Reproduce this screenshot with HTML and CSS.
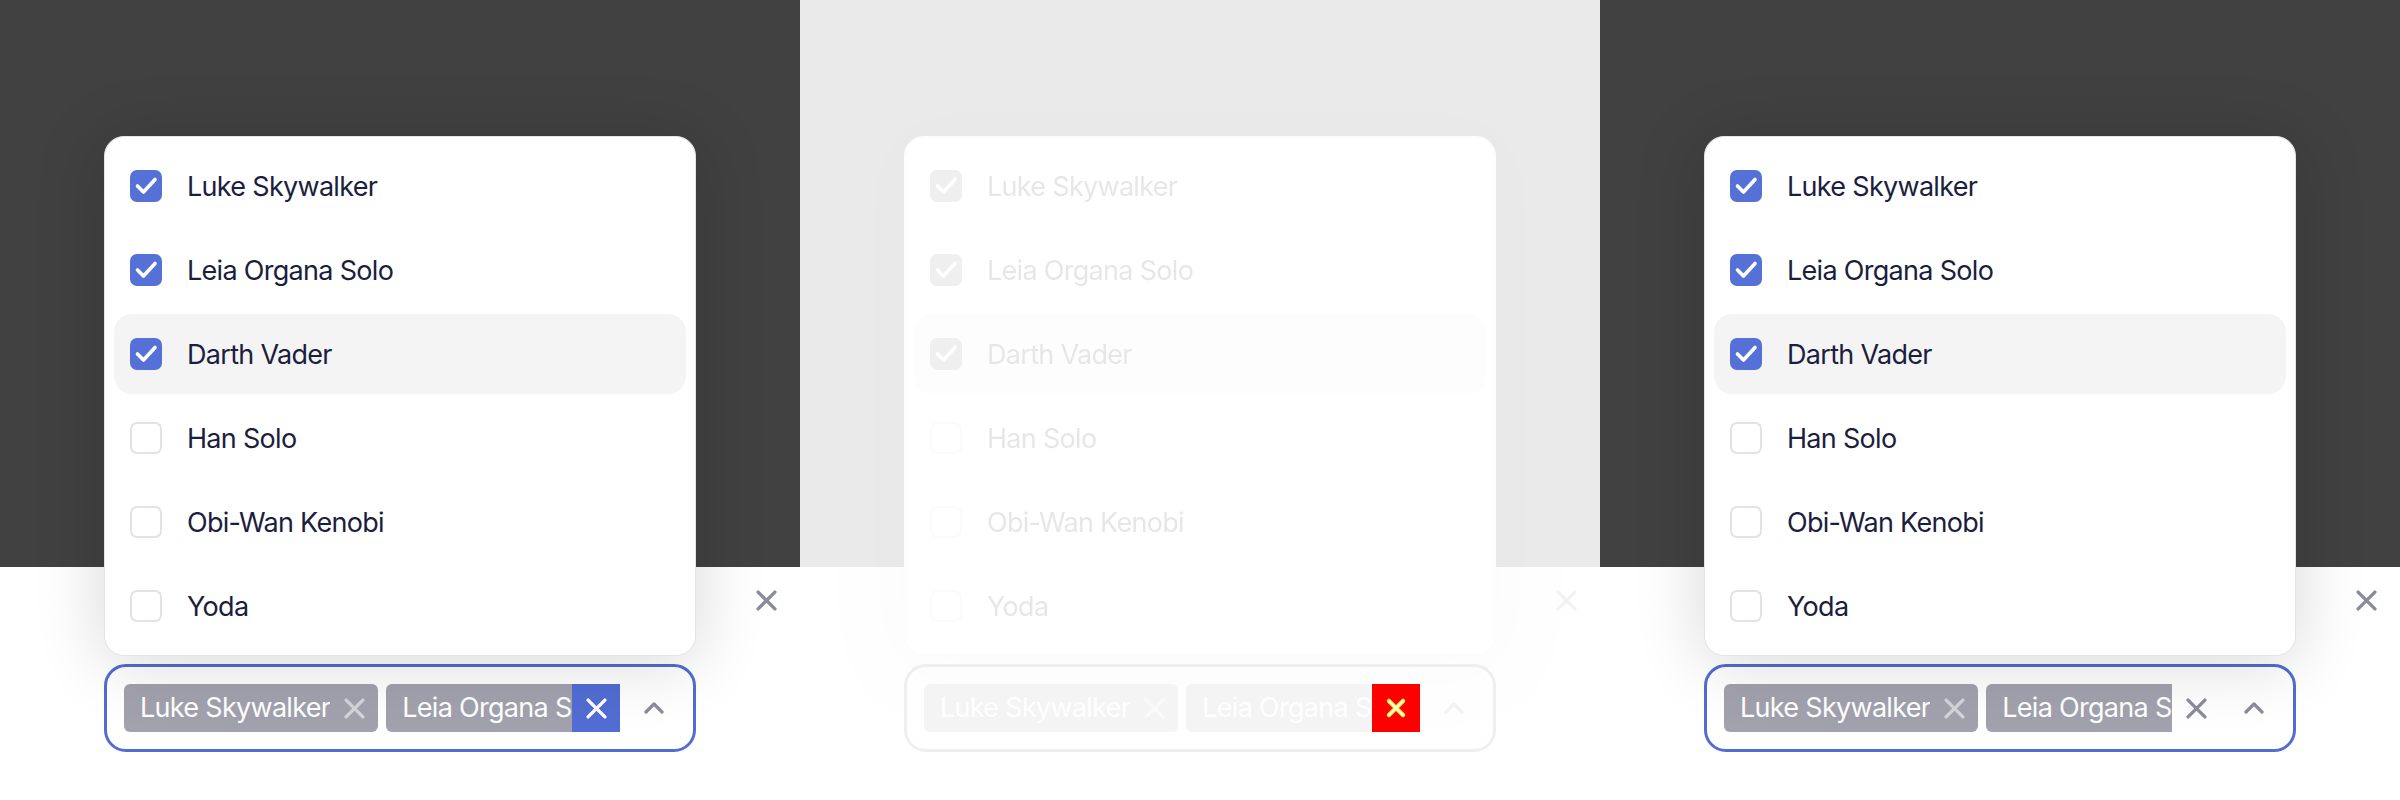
FILE: index.html
```html
<!DOCTYPE html>
<html lang="en">
<head>
<meta charset="utf-8">
<title>Multi select</title>
<link rel="stylesheet" href="styles.css">
</head>
<body>
<main class="stage">

  <!-- Panel 1 -->
  <section class="panel">
    <div class="scene">
      <div class="backdrop"></div>
      <div class="sheet">
        <div class="field">
          <label class="label">Choose an option</label>
          <div class="combo">
            <ul class="menu">
              <li class="option"><span class="box is-checked"><svg viewBox="0 0 32 32"><path d="M7.5 16l6 6L25 9.5"/></svg></span><span class="option-text">Luke Skywalker</span></li>
              <li class="option"><span class="box is-checked"><svg viewBox="0 0 32 32"><path d="M7.5 16l6 6L25 9.5"/></svg></span><span class="option-text">Leia Organa Solo</span></li>
              <li class="option is-hover"><span class="box is-checked"><svg viewBox="0 0 32 32"><path d="M7.5 16l6 6L25 9.5"/></svg></span><span class="option-text">Darth Vader</span></li>
              <li class="option"><span class="box"></span><span class="option-text">Han Solo</span></li>
              <li class="option"><span class="box"></span><span class="option-text">Obi-Wan Kenobi</span></li>
              <li class="option"><span class="box"></span><span class="option-text">Yoda</span></li>
            </ul>
            <div class="control">
              <div class="tags">
                <span class="tag"><span class="tag-text">Luke Skywalker</span><span class="tag-remove"><svg viewBox="0 0 20 20"><path d="M2 2l16 16M18 2L2 18"/></svg></span></span>
                <span class="tag tag-shrink"><span class="tag-text">Leia Organa Solo</span><span class="tag-remove is-active"><svg viewBox="0 0 20 20"><path d="M2 2l16 16M18 2L2 18"/></svg></span></span>
              </div>
              <span class="chevron"><svg viewBox="0 0 20 12"><path d="M2 10l8-8 8 8"/></svg></span>
            </div>
          </div>
        </div>
        <button class="close" aria-label="Close"><svg viewBox="0 0 20 20"><path d="M2 2l16 16M18 2L2 18"/></svg></button>
      </div>
    </div>
  </section>

  <!-- Panel 2 -->
  <section class="panel">
    <div class="scene is-ghost">
      <div class="backdrop"></div>
      <div class="sheet">
        <div class="field">
          <label class="label">Choose an option</label>
          <div class="combo">
            <ul class="menu">
              <li class="option"><span class="box is-checked"><svg viewBox="0 0 32 32"><path d="M7.5 16l6 6L25 9.5"/></svg></span><span class="option-text">Luke Skywalker</span></li>
              <li class="option"><span class="box is-checked"><svg viewBox="0 0 32 32"><path d="M7.5 16l6 6L25 9.5"/></svg></span><span class="option-text">Leia Organa Solo</span></li>
              <li class="option is-hover"><span class="box is-checked"><svg viewBox="0 0 32 32"><path d="M7.5 16l6 6L25 9.5"/></svg></span><span class="option-text">Darth Vader</span></li>
              <li class="option"><span class="box"></span><span class="option-text">Han Solo</span></li>
              <li class="option"><span class="box"></span><span class="option-text">Obi-Wan Kenobi</span></li>
              <li class="option"><span class="box"></span><span class="option-text">Yoda</span></li>
            </ul>
            <div class="control">
              <div class="tags">
                <span class="tag"><span class="tag-text">Luke Skywalker</span><span class="tag-remove"><svg viewBox="0 0 20 20"><path d="M2 2l16 16M18 2L2 18"/></svg></span></span>
                <span class="tag tag-shrink"><span class="tag-text">Leia Organa Solo</span><span class="tag-remove is-active"><svg viewBox="0 0 20 20"><path d="M2 2l16 16M18 2L2 18"/></svg></span></span>
              </div>
              <span class="chevron"><svg viewBox="0 0 20 12"><path d="M2 10l8-8 8 8"/></svg></span>
            </div>
          </div>
        </div>
        <button class="close" aria-label="Close"><svg viewBox="0 0 20 20"><path d="M2 2l16 16M18 2L2 18"/></svg></button>
      </div>
    </div>
    <span class="flag"><svg viewBox="0 0 22 22"><path class="flag-edge" d="M4 4l14 14M18 4L4 18"/><path class="flag-core" d="M4 4l14 14M18 4L4 18"/></svg></span>
  </section>

  <!-- Panel 3 -->
  <section class="panel">
    <div class="scene">
      <div class="backdrop"></div>
      <div class="sheet">
        <div class="field">
          <label class="label">Choose an option</label>
          <div class="combo">
            <ul class="menu">
              <li class="option"><span class="box is-checked"><svg viewBox="0 0 32 32"><path d="M7.5 16l6 6L25 9.5"/></svg></span><span class="option-text">Luke Skywalker</span></li>
              <li class="option"><span class="box is-checked"><svg viewBox="0 0 32 32"><path d="M7.5 16l6 6L25 9.5"/></svg></span><span class="option-text">Leia Organa Solo</span></li>
              <li class="option is-hover"><span class="box is-checked"><svg viewBox="0 0 32 32"><path d="M7.5 16l6 6L25 9.5"/></svg></span><span class="option-text">Darth Vader</span></li>
              <li class="option"><span class="box"></span><span class="option-text">Han Solo</span></li>
              <li class="option"><span class="box"></span><span class="option-text">Obi-Wan Kenobi</span></li>
              <li class="option"><span class="box"></span><span class="option-text">Yoda</span></li>
            </ul>
            <div class="control">
              <div class="tags">
                <span class="tag"><span class="tag-text">Luke Skywalker</span><span class="tag-remove"><svg viewBox="0 0 20 20"><path d="M2 2l16 16M18 2L2 18"/></svg></span></span>
                <span class="tag tag-shrink"><span class="tag-text">Leia Organa Solo</span><span class="tag-remove is-bare"><svg viewBox="0 0 20 20"><path d="M2 2l16 16M18 2L2 18"/></svg></span></span>
              </div>
              <span class="chevron"><svg viewBox="0 0 20 12"><path d="M2 10l8-8 8 8"/></svg></span>
            </div>
          </div>
        </div>
        <button class="close" aria-label="Close"><svg viewBox="0 0 20 20"><path d="M2 2l16 16M18 2L2 18"/></svg></button>
      </div>
    </div>
  </section>

</main>
</body>
</html>
```

FILE: styles.css
```css
* { box-sizing: border-box; }

html, body {
  margin: 0;
  padding: 0;
  background: #ffffff;
}

body {
  font-family: Inter, "Noto Sans", "Liberation Sans", sans-serif;
  color: #1b1e3c;
}

.stage {
  display: grid;
  grid-template-columns: repeat(3, 800px);
  height: 800px;
}

.panel {
  position: relative;
  height: 800px;
  overflow: hidden;
  background: #ffffff;
}

.scene {
  display: flex;
  flex-direction: column;
  height: 800px;
}

.scene.is-ghost {
  opacity: 0.105;
  filter: grayscale(1);
}

.backdrop {
  flex: none;
  height: 567px;
  background: #414141;
}

.sheet {
  flex: 1;
  display: flex;
  align-items: flex-start;
  padding: 0 23px 0 104px;
  background: #ffffff;
}

.field {
  width: 592px;
  margin-top: 56px;
  display: flex;
  flex-direction: column;
}

.label {
  font-size: 27px;
  letter-spacing: -0.6px;
  line-height: 34px;
  font-weight: 500;
  color: #1b1e3c;
  margin-bottom: 7px;
}

.combo {
  position: relative;
}

/* dropdown menu (overlay) */
.menu {
  position: absolute;
  left: 0;
  right: 0;
  bottom: calc(100% + 8px);
  z-index: 2;
  margin: 0;
  padding: 9px;
  list-style: none;
  display: flex;
  flex-direction: column;
  gap: 4px;
  background: #ffffff;
  border: 1px solid #e4e4e4;
  border-radius: 20px;
  box-shadow: 0 6px 70px rgba(0, 0, 0, 0.16);
}

.option {
  height: 80px;
  display: flex;
  align-items: center;
  gap: 25px;
  padding-left: 16px;
  border-radius: 18px;
  font-size: 27px;
  letter-spacing: -0.7px;
  color: #1b1e3c;
}

.option.is-hover {
  background: #f4f4f4;
}

.box {
  flex: none;
  width: 32px;
  height: 32px;
  border-radius: 7px;
  border: 2px solid #e3e3e3;
  background: #ffffff;
  display: flex;
  align-items: center;
  justify-content: center;
}

.box.is-checked {
  border: none;
  background: #5570d6;
}

.box svg {
  width: 32px;
  height: 32px;
  fill: none;
  stroke: #ffffff;
  stroke-width: 3.6;
  stroke-linecap: round;
  stroke-linejoin: round;
}

/* control */
.control {
  height: 88px;
  display: flex;
  align-items: center;
  gap: 12px;
  padding: 0 17px;
  border: 3px solid #526dd3;
  border-radius: 22px;
  background: #ffffff;
}

.tags {
  flex: 1;
  min-width: 0;
  display: flex;
  gap: 8px;
  overflow: hidden;
}

.tag {
  flex: none;
  display: flex;
  align-items: center;
  height: 48px;
  padding-left: 16px;
  border-radius: 6px;
  background: #a1a2ae;
  color: #ffffff;
  font-size: 27px;
  letter-spacing: -0.7px;
}

.tag-shrink {
  flex: 0 1 auto;
  min-width: 0;
}

.tag-text {
  min-width: 0;
  overflow: hidden;
  white-space: nowrap;
  line-height: 48px;
}

.tag-remove {
  flex: none;
  width: 48px;
  height: 48px;
  display: flex;
  align-items: center;
  justify-content: center;
  color: #d4d5db;
}

.tag-remove svg {
  width: 21px;
  height: 21px;
  fill: none;
  stroke: currentColor;
  stroke-width: 3.2;
  stroke-linecap: round;
}

.tag-remove.is-active {
  background: #526dd3;
  color: #ffffff;
}

.tag-remove.is-bare {
  background: #ffffff;
  color: #8b8c9a;
}

.chevron {
  flex: none;
  width: 44px;
  height: 44px;
  display: flex;
  align-items: center;
  justify-content: center;
  color: #8b8c9a;
}

.chevron svg {
  width: 20px;
  height: 12px;
  fill: none;
  stroke: currentColor;
  stroke-width: 3.2;
  stroke-linecap: round;
  stroke-linejoin: round;
}

.close {
  margin: 23px 0 0 auto;
  padding: 0;
  width: 21px;
  height: 21px;
  border: none;
  background: transparent;
  color: #8b8c9a;
  display: block;
}

.close svg {
  width: 21px;
  height: 21px;
  display: block;
  fill: none;
  stroke: currentColor;
  stroke-width: 3.2;
  stroke-linecap: round;
}

/* diff marker laid over the ghost panel */
.flag {
  position: absolute;
  left: 572px;
  top: 684px;
  width: 48px;
  height: 48px;
  background: #ff0000;
  display: flex;
  align-items: center;
  justify-content: center;
}

.flag svg {
  width: 22px;
  height: 22px;
  fill: none;
  stroke-linecap: round;
}

.flag-edge {
  stroke: #ffee00;
  stroke-width: 4.5;
}

.flag-core {
  stroke: #ffffff;
  stroke-width: 2.2;
}
```
